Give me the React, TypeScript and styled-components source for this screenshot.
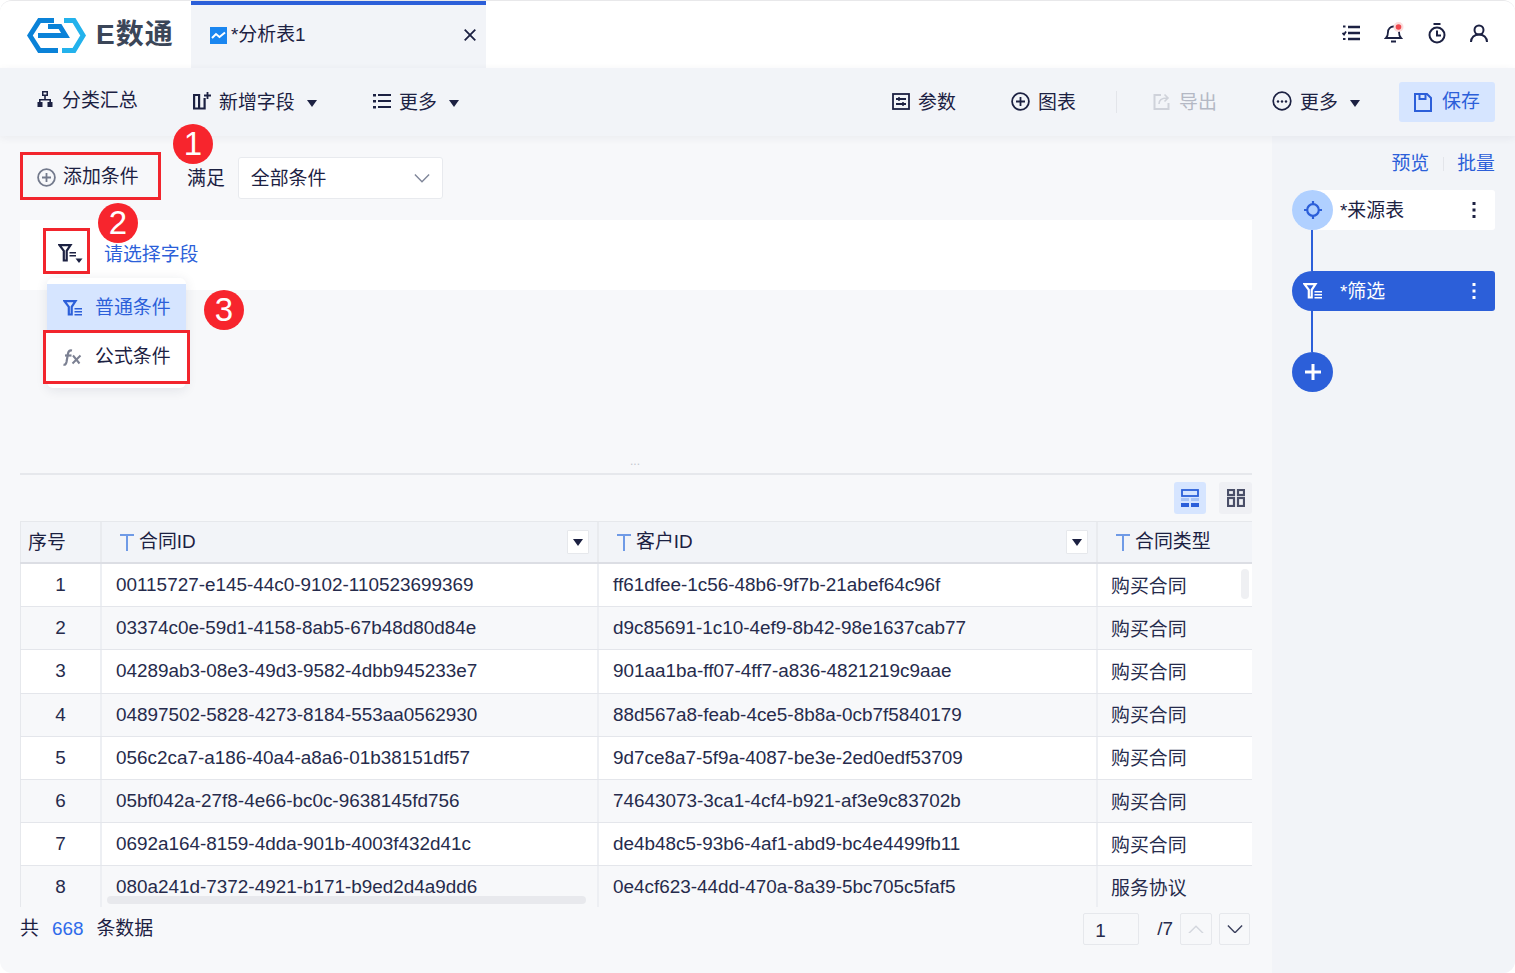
import React from "react";
import styled, { createGlobalStyle } from "styled-components";

const BLUE = "#2c5fd9";
const TEXT = "#1c2142";

const ROWS = [
  ["00115727-e145-44c0-9102-110523699369", "ff61dfee-1c56-48b6-9f7b-21abef64c96f", "购买合同"],
  ["03374c0e-59d1-4158-8ab5-67b48d80d84e", "d9c85691-1c10-4ef9-8b42-98e1637cab77", "购买合同"],
  ["04289ab3-08e3-49d3-9582-4dbb945233e7", "901aa1ba-ff07-4ff7-a836-4821219c9aae", "购买合同"],
  ["04897502-5828-4273-8184-553aa0562930", "88d567a8-feab-4ce5-8b8a-0cb7f5840179", "购买合同"],
  ["056c2ca7-a186-40a4-a8a6-01b38151df57", "9d7ce8a7-5f9a-4087-be3e-2ed0edf53709", "购买合同"],
  ["05bf042a-27f8-4e66-bc0c-9638145fd756", "74643073-3ca1-4cf4-b921-af3e9c83702b", "购买合同"],
  ["0692a164-8159-4dda-901b-4003f432d41c", "de4b48c5-93b6-4af1-abd9-bc4e4499fb11", "购买合同"],
  ["080a241d-7372-4921-b171-b9ed2d4a9dd6", "0e4cf623-44dd-470a-8a39-5bc705c5faf5", "服务协议"],
];

const GlobalStyle = createGlobalStyle`
  html, body {
    margin: 0;
    background: #fff;
  }
  body {
    font-family: "Liberation Sans", "Noto Sans CJK SC", sans-serif;
    font-size: 18.9px;
    line-height: 24px;
    color: ${TEXT};
  }
  * { box-sizing: border-box; }
`;

const Window = styled.div`
  width: 1515px;
  height: 973px;
  display: flex;
  flex-direction: column;
  overflow: hidden;
  border-radius: 12px;
  border-top: 1px solid #e8e8ea;
  background: #f7f8fa;
`;

const TopBar = styled.div`
  height: 67px;
  display: flex;
  align-items: stretch;
  background: #fff;
  flex: none;
`;

const Logo = styled.div`
  width: 191px;
  display: flex;
  align-items: center;
  padding: 1px 0 0 27px;
  gap: 10px;
`;

const LogoText = styled.span`
  font-size: 28px;
  font-weight: 700;
  color: #3b4658;
  letter-spacing: 1px;
  white-space: nowrap;
`;

const Tab = styled.div`
  width: 295px;
  display: flex;
  align-items: center;
  padding: 0 10px 3px 19px;
  background: #f2f4f8;
  border-top: 4px solid ${BLUE};
`;

const TabTitle = styled.span`
  flex: 1;
  margin-left: 4px;
`;

const TopIcons = styled.div`
  margin-left: auto;
  display: flex;
  align-items: center;
  gap: 24px;
  padding: 0 27px 3px 0;
`;

const Toolbar = styled.div`
  height: 68px;
  flex: none;
  display: flex;
  align-items: center;
  justify-content: space-between;
  background: #f2f4f8;
  box-shadow: 0 2px 8px rgba(30, 40, 70, 0.06);
  position: relative;
  z-index: 1;
  padding: 0 20px 0 36px;
`;

const ToolGroup = styled.div`
  display: flex;
  align-items: center;
`;

const ToolItem = styled.div<{ $width?: number; $muted?: boolean; $raise?: boolean }>`
  display: flex;
  align-items: center;
  gap: 8px;
  padding-top: 2px;
  white-space: nowrap;
  width: ${(p) => (p.$width ? `${p.$width}px` : "auto")};
  color: ${(p) => (p.$muted ? "#b4b8c4" : TEXT)};
  margin-top: ${(p) => (p.$raise ? "-5px" : "0")};
  svg {
    margin-bottom: 4px;
  }
`;

const Caret = styled.i<{ $gap?: number }>`
  display: block;
  width: 0;
  height: 0;
  margin-left: ${(p) => p.$gap ?? 10}px;
  border-left: 5.5px solid transparent;
  border-right: 5.5px solid transparent;
  border-top: 7px solid ${TEXT};
`;

const ToolDivider = styled.span`
  width: 1px;
  height: 22px;
  background: #e3e5ea;
  margin-right: 36px;
`;

const SaveButton = styled.div`
  width: 96px;
  height: 40px;
  display: flex;
  align-items: center;
  justify-content: center;
  gap: 10px;
  border-radius: 3px;
  background: #d6e5ff;
  color: ${BLUE};
`;

const Body = styled.div`
  flex: 1;
  display: flex;
  min-height: 0;
`;

const Left = styled.div`
  width: 1272px;
  padding: 0 20px;
  display: flex;
  flex-direction: column;
`;

const ConditionArea = styled.div`
  height: 339px;
  flex: none;
  padding-top: 16px;
  border-bottom: 2px solid #e6e8ec;
  position: relative;
`;

const ConditionRow = styled.div`
  display: flex;
  align-items: center;
  height: 48px;
  position: relative;
`;

const AddButton = styled.div`
  width: 141px;
  height: 48px;
  border: 3px solid #f2252d;
  display: flex;
  align-items: center;
  gap: 7px;
  padding: 2px 0 0 14px;
  white-space: nowrap;
`;

const Label = styled.span`
  margin: 5px 13px 0 26px;
`;

const SelectBox = styled.div`
  width: 205px;
  height: 42px;
  margin-top: 3px;
  display: flex;
  align-items: center;
  justify-content: space-between;
  padding: 2px 12px 0;
  background: #fff;
  border: 1px solid #e8eaee;
  border-radius: 3px;
`;

const Badge = styled.span<{ $x: number; $y: number }>`
  position: absolute;
  left: ${(p) => p.$x}px;
  top: ${(p) => p.$y}px;
  width: 40px;
  height: 40px;
  border-radius: 50%;
  background: #f7252d;
  color: #fff;
  font-size: 33px;
  line-height: 40px;
  text-align: center;
  z-index: 3;
`;

const FilterPanel = styled.div`
  margin-top: 20px;
  height: 70px;
  background: #fff;
  display: flex;
  align-items: flex-start;
  padding: 8px 0 0 23px;
  position: relative;
`;

const FilterButton = styled.div`
  width: 47px;
  height: 46px;
  border: 3px solid #f2252d;
  padding: 13px 0 0 12px;
`;

const FieldLink = styled.span`
  margin: 15px 0 0 14px;
  color: ${BLUE};
`;

const Menu = styled.div`
  position: absolute;
  left: 27px;
  top: 58px;
  width: 139px;
  padding: 6px 0 4px;
  background: #fff;
  border-radius: 6px;
  box-shadow: 0 2px 12px rgba(30, 40, 70, 0.1);
  z-index: 2;
`;

const MenuItem = styled.div<{ $active?: boolean }>`
  height: 46px;
  display: flex;
  align-items: center;
  gap: 13px;
  padding: 2px 0 0 16px;
  background: ${(p) => (p.$active ? "#d6e5ff" : "#fff")};
  color: ${(p) => (p.$active ? BLUE : TEXT)};
`;

const MenuItemMarked = styled(MenuItem)`
  height: 54px;
  margin: 0 -4px;
  padding: 0 0 0 17px;
  gap: 12px;
  border: 3px solid #f2252d;
`;

const Grip = styled.span`
  position: absolute;
  left: 610px;
  bottom: 7px;
  color: #c4c7cf;
  font-size: 12px;
  line-height: 10px;
`;

const ViewBar = styled.div`
  height: 46px;
  flex: none;
  display: flex;
  justify-content: flex-end;
  align-items: flex-start;
  gap: 13px;
  padding-top: 7px;
`;

const ViewButton = styled.div<{ $active?: boolean }>`
  width: ${(p) => (p.$active ? 32 : 33)}px;
  height: 32px;
  border-radius: 3px;
  display: flex;
  align-items: center;
  justify-content: center;
  background: ${(p) => (p.$active ? "#d6e5ff" : "#eff0f4")};
`;

const TableWrap = styled.div`
  height: 386px;
  flex: none;
  overflow: hidden;
  position: relative;
`;

const HeaderRow = styled.div`
  display: grid;
  grid-template-columns: 82px 497px 499px 154px;
  height: 43px;
  background: #f2f4f8;
  border-top: 1px solid #e6e8ec;
  border-bottom: 2px solid #dcdee4;
`;

const HeaderCell = styled.div`
  display: flex;
  align-items: center;
  border-right: 2px solid #e9ebef;
  padding: 0 8px 0 17px;
  white-space: nowrap;
  &:first-child {
    padding: 2px 0 0 7px;
    border-left: 1px solid #e6e8ec;
  }
  &:last-child { border-right: none; }
`;

const HeaderName = styled.span`
  flex: 1;
  margin-left: 4px;
`;

const SortButton = styled.span`
  width: 22px;
  height: 24px;
  background: #fff;
  border: 1px solid #e6e8ec;
  border-radius: 1px;
  display: flex;
  align-items: center;
  justify-content: center;
`;

const Row = styled.div<{ $alt: boolean }>`
  display: grid;
  grid-template-columns: 82px 497px 499px 154px;
  height: 43.2px;
  background: ${(p) => (p.$alt ? "#f7f8fa" : "#fff")};
  border-bottom: 1px solid #e4e6eb;
`;

const Cell = styled.div`
  display: flex;
  align-items: center;
  padding: 0 0 0 14px;
  border-right: 2px solid #edeff3;
  white-space: nowrap;
  color: #262b4c;
  &:first-child {
    justify-content: center;
    padding-left: 0;
    border-left: 1px solid #e6e8ec;
  }
  &:last-child {
    border-right: none;
    padding: 3px 0 0 13px;
  }
`;

const VScroll = styled.span`
  position: absolute;
  left: 1221px;
  top: 48px;
  width: 8px;
  height: 30px;
  border-radius: 4px;
  background: #eff0f3;
`;

const HScroll = styled.span`
  position: absolute;
  left: 87px;
  top: 375px;
  width: 479px;
  height: 8px;
  border-radius: 4px;
  background: #e8e9ed;
`;

const Footer = styled.div`
  flex: 1;
  display: flex;
  align-items: flex-start;
  padding-top: 6px;
`;

const Total = styled.div`
  display: flex;
  gap: 13px;
  padding-top: 4px;
`;

const TotalCount = styled.span`
  color: #2f6bea;
`;

const Pager = styled.div`
  margin-left: auto;
  display: flex;
  align-items: center;
  padding-right: 2px;
`;

const PageInput = styled.div`
  width: 56px;
  height: 32px;
  padding: 5px 0 0 11px;
  border: 1px solid #e6e8ec;
  border-radius: 2px;
  color: #262b4c;
`;

const PageCount = styled.span`
  margin: 0 7px 0 18px;
  color: #262b4c;
`;

const PageButton = styled.div`
  width: 32px;
  height: 32px;
  margin-right: 7px;
  border: 1px solid #e6e8ec;
  border-radius: 2px;
  display: flex;
  align-items: center;
  justify-content: center;
  &:last-child {
    width: 31px;
    margin-right: 0;
  }
`;

const Right = styled.div`
  flex: 1;
  background: #f2f4f8;
  padding: 14px 20px 0;
`;

const LinkRow = styled.div`
  display: flex;
  justify-content: flex-end;
  align-items: center;
  height: 26px;
  padding-top: 2px;
  color: ${BLUE};
`;

const LinkDivider = styled.span`
  width: 1px;
  height: 14px;
  background: #e3e5ea;
  margin: 0 13px 0 14px;
`;

const NodeList = styled.div`
  margin-top: 14px;
  display: flex;
  flex-direction: column;
`;

const Node = styled.div<{ $active?: boolean }>`
  height: 40px;
  display: flex;
  align-items: center;
  border-radius: 20px 3px 3px 20px;
  background: ${(p) => (p.$active ? BLUE : "#fff")};
  color: ${(p) => (p.$active ? "#fff" : TEXT)};
  padding-right: 19px;
`;

const NodeIcon = styled.span<{ $light?: boolean }>`
  width: 41px;
  height: 40px;
  flex: none;
  border-radius: 50%;
  display: flex;
  align-items: center;
  justify-content: center;
  background: ${(p) => (p.$light ? "#b0d0ff" : "transparent")};
`;

const NodeName = styled.span`
  flex: 1;
  margin: 2px 0 0 7px;
`;

const Connector = styled.span`
  width: 2px;
  height: 41px;
  margin-left: 19px;
  background: ${BLUE};
`;

const AddNode = styled.span`
  width: 41px;
  height: 40px;
  border-radius: 50%;
  background: ${BLUE};
  display: flex;
  align-items: center;
  justify-content: center;
`;

const LogoMark = () => (
  <svg width="59" height="35" viewBox="0 0 59 35" fill="none">
    <path d="M27 2.500H12.500L2.900 17.500 12.500 32.500H31" stroke="#0a82d8" strokeWidth="5" />
    <path d="M11 17.500H38.500L33 8.500H21" stroke="#0a82d8" strokeWidth="5" />
    <path d="M37 2.500H47L56.100 17.500 47 32.500H35" stroke="#23b2ec" strokeWidth="5" />
  </svg>
);

const TrendIcon = () => (
  <svg width="17" height="17" viewBox="0 0 17 17">
    <rect width="17" height="17" fill="#1a86f0" />
    <path d="M2 11L6 7l3.500 3L15 5.500" stroke="#fff" strokeWidth="2" fill="none" />
  </svg>
);

const CloseIcon = () => (
  <svg width="12" height="12" viewBox="0 0 12 12">
    <path d="M.7.7l10.600 10.600M11.300.7L.7 11.300" stroke={TEXT} strokeWidth="1.800" />
  </svg>
);

const TaskIcon = () => (
  <svg width="18" height="18" viewBox="0 0 18 18" fill="none" stroke={TEXT} strokeWidth="2.400">
    <path d="M6 3h12M6 9h12M6 15h12" />
    <path d="M1 2.500h2.500M.5 9l1.500 1.500L4 7.500M1 15h2.500" strokeWidth="1.800" />
  </svg>
);

const BellIcon = () => (
  <svg width="20" height="22" viewBox="0 0 20 22" fill="none">
    <path d="M2 16c1.500-1.500 2-3 2-6a5.500 5.500 0 0 1 11 0c0 3 .5 4.500 2 6z" stroke={TEXT} strokeWidth="1.800" />
    <path d="M7 19.500h5" stroke={TEXT} strokeWidth="1.800" />
    <circle cx="14.500" cy="5" r="5" fill="#fbdcdc" />
    <circle cx="14.500" cy="5" r="2.800" fill="#f0484e" />
  </svg>
);

const TimerIcon = () => (
  <svg width="18" height="21" viewBox="0 0 18 21" fill="none" stroke={TEXT} strokeWidth="2">
    <path d="M5.500 1h7" />
    <circle cx="9" cy="12" r="7.500" />
    <path d="M9 7.500V12.500h4" />
  </svg>
);

const UserIcon = () => (
  <svg width="18" height="19" viewBox="0 0 18 19" fill="none" stroke={TEXT} strokeWidth="2">
    <circle cx="9" cy="6" r="4.500" />
    <path d="M1 18c0-4.500 3.500-7.500 8-7.500s8 3 8 7.500" />
  </svg>
);

const HierarchyIcon = () => (
  <svg width="18" height="16" viewBox="0 0 18 16" fill={TEXT}>
    <path d="M6 0h6v5H9.800v3H15v3h1.500v5h-5v-5H13.400V9.500H4.600V11H6.500v5h-5v-5H3V8h5.200V5H6zM7.500 1.500v2h3v-2z" fillRule="evenodd" />
  </svg>
);

const AddColumnIcon = () => (
  <svg width="18" height="18" viewBox="0 0 18 18" fill="none" stroke={TEXT} strokeWidth="2.200">
    <path d="M1.100 3h5v13.500h-5zM6.100 16.500h5.500V6" />
    <path d="M14.500 0v7M11 3.500h7" strokeWidth="1.800" />
  </svg>
);

const ListIcon = () => (
  <svg width="18" height="16" viewBox="0 0 18 16" fill={TEXT}>
    <rect x="0" y="1" width="3" height="2.500" />
    <rect x="0" y="7" width="3" height="2.500" />
    <rect x="0" y="13" width="3" height="2.500" />
    <rect x="5" y="1" width="13" height="2" />
    <rect x="5" y="7" width="13" height="2" />
    <rect x="5" y="13" width="13" height="2" />
  </svg>
);

const ParamIcon = () => (
  <svg width="18" height="17" viewBox="0 0 18 17" fill="none" stroke={TEXT} strokeWidth="1.800">
    <rect x="1" y="1" width="16" height="15" />
    <path d="M4 6h10M4 11h10" />
    <path d="M7 4v4M11 9v4" strokeWidth="1.500" />
  </svg>
);

const PlusCircleIcon = ({ color = TEXT }: { color?: string }) => (
  <svg width="19" height="19" viewBox="0 0 19 19" fill="none" stroke={color} strokeWidth="1.800">
    <circle cx="9.500" cy="9.500" r="8.400" />
    <path d="M9.500 5v9M5 9.500h9" />
  </svg>
);

const ExportIcon = () => (
  <svg width="18" height="18" viewBox="0 0 18 18" fill="none" stroke="#cfd2da" strokeWidth="2">
    <path d="M8 3H1.500v14h14v-6" />
    <path d="M6 12c0-4 3-6 8-6M11.500 2.500L15 6l-3.500 3.500" strokeWidth="1.600" />
  </svg>
);

const DotsCircleIcon = () => (
  <svg width="20" height="20" viewBox="0 0 20 20" fill="none">
    <circle cx="10" cy="10" r="8.800" stroke={TEXT} strokeWidth="1.700" />
    <circle cx="6" cy="10.500" r="1.200" fill={TEXT} />
    <circle cx="10" cy="10.500" r="1.200" fill={TEXT} />
    <circle cx="14" cy="10.500" r="1.200" fill={TEXT} />
  </svg>
);

const SaveIcon = () => (
  <svg width="18" height="19" viewBox="0 0 18 19" fill="none" stroke={BLUE} strokeWidth="2">
    <path d="M1 1h12l4 4v13H1z" />
    <path d="M5.500 1v5h6V1" />
  </svg>
);

const ChevronIcon = ({ up, color = "#7f8699", width = 16 }: { up?: boolean; color?: string; width?: number }) => (
  <svg width={width} height={width / 1.8} viewBox="0 0 18 10" fill="none" stroke={color} strokeWidth="1.600">
    <path d={up ? "M1 9.300L9 1.300l8 8" : "M1 .7l8 8 8-8"} />
  </svg>
);

const PlainFilterIcon = ({ color }: { color: string }) => (
  <svg width="19" height="16" viewBox="0 0 19 16" fill="none" style={{ display: "block" }}>
    <path d="M1.500 1.200h11L8.700 6.800V14.500H5.800V6.800z" stroke={color} strokeWidth="2.200" />
    <path d="M11.500 8.800H19M11.500 11.800H19M11.500 14.800H19" stroke={color} strokeWidth="1.600" />
  </svg>
);

const DropdownFilterIcon = () => (
  <svg width="25" height="20" viewBox="0 0 25 20" fill="none" style={{ display: "block" }}>
    <path d="M1.500 1.200h11L8.700 6.800V16.500H5.800V6.800z" stroke={TEXT} strokeWidth="2.200" />
    <path d="M11.500 8.800H18M11.500 11.800H18" stroke={TEXT} strokeWidth="1.500" />
    <path d="M17.500 14.500h7l-3.500 4.500z" fill={TEXT} />
  </svg>
);

const FxIcon = () => (
  <svg width="20" height="17" viewBox="0 0 20 17" fill="none" stroke="#7b8092" strokeWidth="2.200">
    <path d="M9 1.500C6.500 1 5.500 2 5 4.500L3.500 13C3 15.500 2 16 .5 15.500" />
    <path d="M2 6.500h6.500" />
    <path d="M10 6.500l6.500 8M17.500 6.500L9.500 14.500" strokeWidth="2" />
  </svg>
);

const RowViewIcon = () => (
  <svg width="18" height="18" viewBox="0 0 18 18">
    <rect x="1" y="1" width="16" height="6" fill="none" stroke={BLUE} strokeWidth="1.800" />
    <rect x="0" y="9" width="8" height="3" fill="#a9c4f5" />
    <rect x="10" y="9" width="8" height="3" fill="#a9c4f5" />
    <rect x="0" y="14" width="8" height="4" fill={BLUE} />
    <rect x="10" y="14" width="8" height="4" fill={BLUE} />
  </svg>
);

const GridViewIcon = () => (
  <svg width="18" height="18" viewBox="0 0 18 18" fill="none" stroke="#4a4f68" strokeWidth="2.200">
    <rect x="1" y="1" width="6" height="5" />
    <rect x="11" y="1" width="6" height="5" />
    <rect x="1" y="9" width="6" height="8" />
    <rect x="11" y="9" width="6" height="8" />
  </svg>
);

const TextTypeIcon = () => (
  <svg width="16" height="18" viewBox="0 0 16 18" fill="none" stroke="#6f9ae6" strokeWidth="2">
    <path d="M1 2h14M8 2v16" />
  </svg>
);

const SortCaret = () => (
  <svg width="10" height="7" viewBox="0 0 10 7">
    <path d="M0 0h10L5 7z" fill={TEXT} />
  </svg>
);

const TargetIcon = () => (
  <svg width="18" height="18" viewBox="0 0 18 18" fill="none" stroke={BLUE} strokeWidth="2.200">
    <circle cx="9" cy="9" r="5.800" />
    <path d="M9 0v4M9 14v4M0 9h4M14 9h4" />
  </svg>
);

const KebabIcon = ({ color }: { color: string }) => (
  <svg width="4" height="18" viewBox="0 0 4 18" fill={color}>
    <rect x="0.500" y="1" width="3" height="3" />
    <rect x="0.500" y="7.500" width="3" height="3" />
    <rect x="0.500" y="14" width="3" height="3" />
  </svg>
);

const WhitePlus = () => (
  <svg width="18" height="18" viewBox="0 0 18 18" stroke="#fff" strokeWidth="3">
    <path d="M9 1v16M1 9h16" />
  </svg>
);

export default function App() {
  return (
    <>
      <GlobalStyle />
      <Window>
        <TopBar>
          <Logo>
            <LogoMark />
            <LogoText>E数通</LogoText>
          </Logo>
          <Tab>
            <TrendIcon />
            <TabTitle>*分析表1</TabTitle>
            <CloseIcon />
          </Tab>
          <TopIcons>
            <TaskIcon />
            <BellIcon />
            <TimerIcon />
            <UserIcon />
          </TopIcons>
        </TopBar>
        <Toolbar>
          <ToolGroup>
            <ToolItem $width={157} $raise>
              <HierarchyIcon />
              分类汇总
            </ToolItem>
            <ToolItem $width={180}>
              <AddColumnIcon />
              新增字段
              <Caret $gap={4} />
            </ToolItem>
            <ToolItem>
              <ListIcon />
              更多
              <Caret $gap={4} />
            </ToolItem>
          </ToolGroup>
          <ToolGroup>
            <ToolItem $width={119}>
              <ParamIcon />
              参数
            </ToolItem>
            <ToolItem $width={105}>
              <PlusCircleIcon />
              图表
            </ToolItem>
            <ToolDivider />
            <ToolItem $width={119} $muted>
              <ExportIcon />
              导出
            </ToolItem>
            <ToolItem $width={127}>
              <DotsCircleIcon />
              更多
              <Caret $gap={4} />
            </ToolItem>
            <SaveButton>
              <SaveIcon />
              保存
            </SaveButton>
          </ToolGroup>
        </Toolbar>
        <Body>
          <Left>
            <ConditionArea>
              <ConditionRow>
                <AddButton>
                  <PlusCircleIcon color="#737a8c" />
                  添加条件
                </AddButton>
                <Label>满足</Label>
                <SelectBox>
                  全部条件
                  <ChevronIcon />
                </SelectBox>
                <Badge $x={153} $y={-28}>1</Badge>
                <Badge $x={78} $y={51}>2</Badge>
              </ConditionRow>
              <FilterPanel>
                <FilterButton>
                  <DropdownFilterIcon />
                </FilterButton>
                <FieldLink>请选择字段</FieldLink>
                <Menu>
                  <MenuItem $active>
                    <PlainFilterIcon color={BLUE} />
                    普通条件
                  </MenuItem>
                  <MenuItemMarked>
                    <FxIcon />
                    公式条件
                  </MenuItemMarked>
                </Menu>
                <Badge $x={184} $y={70}>3</Badge>
              </FilterPanel>
              <Grip>...</Grip>
            </ConditionArea>
            <ViewBar>
              <ViewButton $active>
                <RowViewIcon />
              </ViewButton>
              <ViewButton>
                <GridViewIcon />
              </ViewButton>
            </ViewBar>
            <TableWrap>
              <HeaderRow>
                <HeaderCell>序号</HeaderCell>
                <HeaderCell>
                  <TextTypeIcon />
                  <HeaderName>合同ID</HeaderName>
                  <SortButton>
                    <SortCaret />
                  </SortButton>
                </HeaderCell>
                <HeaderCell>
                  <TextTypeIcon />
                  <HeaderName>客户ID</HeaderName>
                  <SortButton>
                    <SortCaret />
                  </SortButton>
                </HeaderCell>
                <HeaderCell>
                  <TextTypeIcon />
                  <HeaderName>合同类型</HeaderName>
                </HeaderCell>
              </HeaderRow>
              {ROWS.map((row, i) => (
                <Row key={row[0]} $alt={i % 2 === 1}>
                  <Cell>{i + 1}</Cell>
                  <Cell>{row[0]}</Cell>
                  <Cell>{row[1]}</Cell>
                  <Cell>{row[2]}</Cell>
                </Row>
              ))}
              <VScroll />
              <HScroll />
            </TableWrap>
            <Footer>
              <Total>
                <span>共</span>
                <TotalCount>668</TotalCount>
                <span>条数据</span>
              </Total>
              <Pager>
                <PageInput>1</PageInput>
                <PageCount>/7</PageCount>
                <PageButton>
                  <ChevronIcon up color="#d4d7de" />
                </PageButton>
                <PageButton>
                  <ChevronIcon color="#3a3f5c" />
                </PageButton>
              </Pager>
            </Footer>
          </Left>
          <Right>
            <LinkRow>
              预览
              <LinkDivider />
              批量
            </LinkRow>
            <NodeList>
              <Node>
                <NodeIcon $light>
                  <TargetIcon />
                </NodeIcon>
                <NodeName>*来源表</NodeName>
                <KebabIcon color={TEXT} />
              </Node>
              <Connector />
              <Node $active>
                <NodeIcon>
                  <PlainFilterIcon color="#fff" />
                </NodeIcon>
                <NodeName>*筛选</NodeName>
                <KebabIcon color="#fff" />
              </Node>
              <Connector />
              <AddNode>
                <WhitePlus />
              </AddNode>
            </NodeList>
          </Right>
        </Body>
      </Window>
    </>
  );
}
